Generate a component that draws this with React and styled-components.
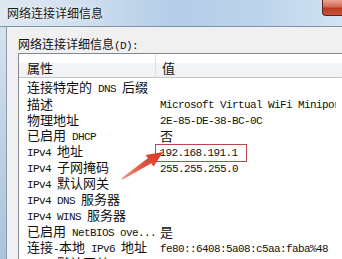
import React from 'react';
import styled, {createGlobalStyle} from 'styled-components';

const GlobalStyle = createGlobalStyle`
html, body {
  margin: 0;
  padding: 0;
}
body {
  width: 342px;
  height: 259px;
  overflow: hidden;
  background: #f0f0f0;
  font-family: "Noto Sans CJK SC", "Liberation Sans", sans-serif;
  color: #111;
}
`;

const Window = styled.div`
display: flex;
flex-direction: column;
width: 342px;
height: 259px;
overflow: hidden;
`;

const TitleBar = styled.div`
flex: none;
height: 26px;
display: flex;
justify-content: space-between;
align-items: center;
padding-left: 7px;
background: linear-gradient(90deg, #dfe8f1 0%, #cfdeee 25%, #b4cde8 50%, #bcd3ea 75%, #d2e3f4 100%);
border-bottom: 1px solid #7f93a8;
`;

const Title = styled.span`
font-size: 12px;
line-height: 16px;
color: #1a1a1a;
text-shadow: 0 0 6px rgba(255, 255, 255, 0.95);
`;

const CloseButton = styled.div`
align-self: flex-start;
width: 20px;
height: 16px;
box-sizing: border-box;
border: 1px solid #5e2519;
border-top: none;
border-right: none;
border-bottom-left-radius: 4px;
background: linear-gradient(180deg, #e9a592 0%, #d46a50 45%, #b93b22 55%, #c9553a 100%);
`;

const Body = styled.div`
flex: 1;
display: flex;
min-height: 0;
`;

const Frame = styled.div`
flex: none;
width: 6px;
background: linear-gradient(180deg, #d6e2ee 0%, #c2d4e6 40%, #adc3da 100%);
border-right: 1px solid #8b9cb0;
`;

const Client = styled.div`
flex: 1;
min-width: 0;
padding: 9px 0 0 11px;
background: #f0f0f0;
overflow: hidden;
`;

const Caption = styled.div`
font-size: 12px;
line-height: 16px;
height: 16px;
margin-bottom: 1px;
white-space: nowrap;
`;

const ListBox = styled.div`
position: relative;
width: 340px;
height: 260px;
background: #fff;
border: 1px solid #828790;
`;

const Header = styled.div`
display: flex;
height: 24px;
box-sizing: border-box;
border-bottom: 1px solid #c4c6c9;
background: linear-gradient(180deg, #ffffff 0%, #ffffff 40%, #f3f4f6 41%, #f1f2f4 100%);
`;

const HeaderCell = styled.div`
display: flex;
align-items: center;
box-sizing: border-box;
width: ${p => p.$width ? p.$width + 'px' : 'auto'};
flex: ${p => p.$width ? 'none' : '1'};
padding: 3px 0 0 ${p => p.$pad}px;
font-size: 13px;
border-left: ${p => p.$divider ? '1px solid #dfe1e4' : 'none'};
`;

const Rows = styled.div`
padding-top: 2px;
`;

const Row = styled.div`
display: flex;
align-items: center;
height: 16px;
font-size: 13px;
line-height: 16px;
white-space: nowrap;
`;

const Label = styled.div`
flex: none;
width: 136px;
box-sizing: border-box;
padding-left: 8px;
overflow: hidden;
`;

const Value = styled.div`
flex: none;
width: 181px;
box-sizing: border-box;
padding-left: 5px;
overflow: visible;
clip-path: inset(-3px 0 -3px -8px);
`;

const Mono = styled.span`
font-family: "Liberation Mono", monospace;
font-size: 11px;
letter-spacing: -0.6px;
`;

const Highlight = styled.span`
display: inline-flex;
align-items: center;
height: 18px;
box-sizing: border-box;
margin-left: -5px;
padding: 0 8px 0 3.5px;
border: 1.5px solid #b5484b;
`;

const Arrow = styled.svg`
position: absolute;
left: 96px;
top: 86px;
pointer-events: none;
`;

const ROWS = [
    ['连接特定的 DNS 后缀', ''],
    ['描述', 'Microsoft Virtual WiFi Miniport Adapter'],
    ['物理地址', '2E-85-DE-38-BC-0C'],
    ['已启用 DHCP', '否'],
    ['IPv4 地址', '192.168.191.1', true],
    ['IPv4 子网掩码', '255.255.255.0'],
    ['IPv4 默认网关', ''],
    ['IPv4 DNS 服务器', ''],
    ['IPv4 WINS 服务器', ''],
    ['已启用 NetBIOS ove...', '是'],
    ['连接-本地 IPv6 地址', 'fe80::6408:5a08:c5aa:faba%48'],
    ['IPv6 默认网关', ''],
];

// ascii runs use the narrow mono face, chinese stays in Noto CJK
const mixed = text =>
    text.split(/([\x20-\x7e]+)/).filter(Boolean).map((part, i) =>
        /^[\x20-\x7e]+$/.test(part) ? <Mono key={i}>{part}</Mono> : <span key={i}>{part}</span>
    );

export default function App() {
    return <Window>
        <GlobalStyle/>
        <TitleBar>
            <Title>网络连接详细信息</Title>
            <CloseButton/>
        </TitleBar>
        <Body>
            <Frame/>
            <Client>
                <Caption>网络连接详细信息<Mono>(D):</Mono></Caption>
                <ListBox>
                    <Header>
                        <HeaderCell $width={136} $pad={8}>属性</HeaderCell>
                        <HeaderCell $pad={6} $divider>值</HeaderCell>
                    </Header>
                    <Rows>
                        {ROWS.map(([label, value, boxed], index) => (
                            <Row key={index}>
                                <Label>{mixed(label)}</Label>
                                <Value>
                                    {boxed ? <Highlight>{mixed(value)}</Highlight> : mixed(value)}
                                </Value>
                            </Row>
                        ))}
                    </Rows>
                    <Arrow width="55" height="45" viewBox="0 0 55 45">
                        <defs>
                            <linearGradient id="arrowFill" x1="0" y1="1" x2="1" y2="0">
                                <stop offset="0" stopColor="#f2a08f"/>
                                <stop offset="0.5" stopColor="#e2543e"/>
                                <stop offset="1" stopColor="#d83521"/>
                            </linearGradient>
                            <filter id="soft" x="-20%" y="-20%" width="140%" height="140%">
                                <feGaussianBlur stdDeviation="0.45"/>
                            </filter>
                        </defs>
                        <polygon
                            points="48,12 38.5,26.7 36.3,23.3 7.6,39.8 6.4,38.2 32.9,18.3 30.7,14.9"
                            fill="url(#arrowFill)"
                            filter="url(#soft)"
                        />
                    </Arrow>
                </ListBox>
            </Client>
        </Body>
    </Window>;
}
